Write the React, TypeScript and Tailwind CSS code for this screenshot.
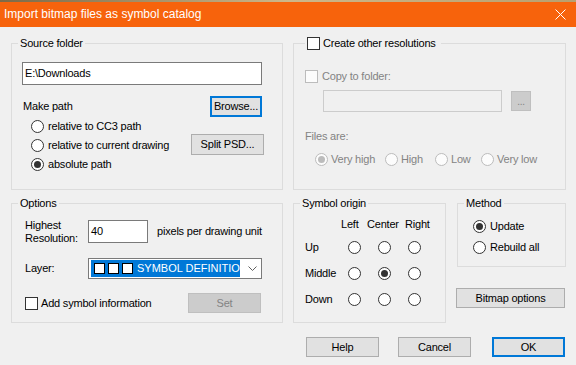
import React from 'react';

const FONT = { fontFamily: '"Liberation Sans", Arial, sans-serif' };

function Radio({ checked = false, disabled = false }: { checked?: boolean; disabled?: boolean }) {
  return (
    <span
      className={`w-[13px] h-[13px] rounded-full border flex items-center justify-center shrink-0 ${
        disabled ? 'border-[#bcbcbc] bg-[#fcfcfc]' : 'border-[#333333] bg-white'
      }`}
    >
      {checked && <span className={`w-[7px] h-[7px] rounded-full ${disabled ? 'bg-[#bcbcbc]' : 'bg-[#333333]'}`} />}
    </span>
  );
}

function Check({ disabled = false }: { disabled?: boolean }) {
  return (
    <span
      className={`w-[13px] h-[13px] border shrink-0 block ${disabled ? 'border-[#bcbcbc] bg-[#fcfcfc]' : 'border-[#333333] bg-white'}`}
    />
  );
}

function Btn({ label, w, primary = false, disabled = false, className = '' }: { label: string; w: string; primary?: boolean; disabled?: boolean; className?: string }) {
  const tone = primary
    ? 'border-2 border-[#0078d7] bg-[#e1e1e1] text-black'
    : disabled
    ? 'border border-[#bfbfbf] bg-[#cccccc] text-[#838383]'
    : 'border border-[#adadad] bg-[#e1e1e1] text-black';
  return (
    <div className={`${w} h-[20px] flex items-center justify-center shrink-0 ${tone} ${className}`}>
      {label}
    </div>
  );
}

function Group({ legend, className = '', children }: { legend: React.ReactNode; className?: string; children?: React.ReactNode }) {
  return (
    <fieldset className={`border border-[#dcdcdc] shrink-0 ${className}`}>
      <legend className="ml-[6px] px-[2px] h-[14px] leading-[14px]">{legend}</legend>
      {children}
    </fieldset>
  );
}

export default function App() {
  return (
    <div className="w-[576px] h-[365px] bg-[#f0f0f0] overflow-hidden text-[11px] leading-[13px] tracking-[-0.2px] text-black" style={FONT}>
      {/* title bar */}
      <div className="h-[2px] bg-gradient-to-r from-[#7d6a48] via-[#cdb78a] to-[#b8a070]" />
      <div className="h-[25px] bg-[#f7630c] flex items-center justify-between pl-[4px] pr-[10px]">
        <span className="text-white text-[12px] tracking-normal">Import bitmap files as symbol catalog</span>
        <svg width="11" height="11" viewBox="0 0 11 11" className="mb-[1px]">
          <path d="M0.5 0.5 L10.5 10.5 M10.5 0.5 L0.5 10.5" stroke="white" strokeWidth="1" />
        </svg>
      </div>

      <div className="flex gap-[10px] pl-[11px] pt-[9px]">
        {/* left column */}
        <div className="w-[272px] flex flex-col">
          <Group legend="Source folder" className="h-[154px]">
            <div className="flex flex-col">
              <div className="mt-[12px] ml-[10px] w-[240px] h-[23px] border border-[#7a7a7a] bg-white flex items-center pl-[2px]">
                E:\Downloads
              </div>
              <div className="mt-[11px] h-[21px] flex items-center justify-between pl-[11px] pr-[20px]">
                <span>Make path</span>
                <div className="w-[52px] h-[21px] border-2 border-[#0078d7] bg-[#e1e1e1] flex items-center justify-center">Browse...</div>
              </div>
              <div className="flex">
                <div className="w-[179px] flex flex-col">
                  {['relative to CC3 path', 'relative to current drawing', 'absolute path'].map((t, i) => (
                    <div key={t} className="h-[19px] flex items-center gap-[4px] pl-[19px]">
                      <Radio checked={i === 2} />
                      <span>{t}</span>
                    </div>
                  ))}
                </div>
                <Btn label="Split PSD..." w="w-[73px]" className="mt-[17px] h-[21px]" />
              </div>
            </div>
          </Group>

          <Group legend="Options" className="h-[127px] mt-[6px]">
            <div className="flex flex-col">
              <div className="mt-[10px] h-[23px] flex items-center pl-[13px]">
                <div className="w-[63px] flex flex-col">
                  <span>Highest</span>
                  <span>Resolution:</span>
                </div>
                <div className="w-[60px] h-[23px] border border-[#7a7a7a] bg-white flex items-center pl-[2px]">40</div>
                <span className="ml-[9px]">pixels per drawing unit</span>
              </div>
              <div className="mt-[15px] h-[21px] flex items-center pl-[13px]">
                <span className="w-[63px]">Layer:</span>
                <div className="w-[174px] h-[21px] border border-[#7a7a7a] bg-white flex items-center pl-[2px]">
                  <div className="w-[149px] h-[17px] bg-[#0078d7] flex items-center pl-[3px] overflow-hidden whitespace-nowrap">
                    <span className="w-[11px] h-[11px] bg-white border border-black shrink-0" />
                    <span className="w-[11px] h-[11px] bg-white border border-black shrink-0 ml-[3px]" />
                    <span className="w-[11px] h-[11px] bg-white border border-black shrink-0 ml-[3px]" />
                    <span className="text-white ml-[4px] tracking-normal">SYMBOL DEFINITION</span>
                  </div>
                  <svg width="9" height="5" viewBox="0 0 9 5" className="ml-[8px]">
                    <path d="M0.5 0.5 L4.5 4.5 L8.5 0.5" stroke="#606060" strokeWidth="1" fill="none" />
                  </svg>
                </div>
              </div>
              <div className="mt-[14px] h-[20px] flex items-center pl-[13px]">
                <Check />
                <span className="ml-[3px] w-[147px]">Add symbol information</span>
                <Btn label="Set" w="w-[73px]" disabled />
              </div>
            </div>
          </Group>
        </div>

        {/* right column */}
        <div className="w-[273px] flex flex-col">
          <fieldset className="border border-[#dcdcdc] h-[154px] shrink-0">
            <legend className="ml-[11px] pl-[2px] pr-[5px] h-[14px] flex items-center gap-[3px]">
              <Check />
              <span>Create other resolutions</span>
            </legend>
            <div className="flex flex-col text-[#838383]">
              <div className="mt-[20px] h-[13px] flex items-center pl-[11px] gap-[4px]">
                <Check disabled />
                <span>Copy to folder:</span>
              </div>
              <div className="mt-[7px] flex items-center pl-[29px]">
                <div className="w-[179px] h-[22px] border border-[#cccccc] bg-[#f0f0f0]" />
                <div className="ml-[9px] w-[20px] h-[20px] border border-[#bfbfbf] bg-[#cccccc] flex items-center justify-center text-[10px]">...</div>
              </div>
              <div className="mt-[18px] pl-[11px]">Files are:</div>
              <div className="mt-[10px] h-[13px] flex items-center pl-[21px]">
                <div className="w-[70px] flex items-center gap-[3px]"><Radio checked disabled /><span>Very high</span></div>
                <div className="w-[50px] flex items-center gap-[3px]"><Radio disabled /><span>High</span></div>
                <div className="w-[46px] flex items-center gap-[3px]"><Radio disabled /><span>Low</span></div>
                <div className="flex items-center gap-[3px]"><Radio disabled /><span>Very low</span></div>
              </div>
            </div>
          </fieldset>

          <div className="mt-[6px] flex gap-[11px]">
            <Group legend="Symbol origin" className="w-[153px] h-[127px]">
              <div className="flex flex-col">
                <div className="mt-[7px] h-[14px] flex items-center pl-[47px]">
                  <span className="w-[26px]">Left</span>
                  <span className="w-[38px]">Center</span>
                  <span>Right</span>
                </div>
                <div className="mt-[3px] flex flex-col">
                  {['Up', 'Middle', 'Down'].map((r) => (
                    <div key={r} className="h-[26px] flex items-center pl-[11px]">
                      <span className="w-[34px]">{r}</span>
                      {[0, 1, 2].map((c) => (
                        <div key={c} className="w-[30px] flex justify-center">
                          <Radio checked={r === 'Middle' && c === 1} />
                        </div>
                      ))}
                    </div>
                  ))}
                </div>
              </div>
            </Group>

            <div className="w-[110px] flex flex-col">
              <Group legend="Method" className="h-[71px]">
                <div className="mt-[6px] flex flex-col">
                  <div className="h-[21px] flex items-center gap-[4px] pl-[15px]"><Radio checked /><span>Update</span></div>
                  <div className="h-[21px] flex items-center gap-[4px] pl-[15px]"><Radio /><span>Rebuild all</span></div>
                </div>
              </Group>
              <Btn label="Bitmap options" w="w-[109px]" className="mt-[21px] -ml-[1px]" />
            </div>
          </div>

          <div className="mt-[14px] flex pl-[13px]">
            <Btn label="Help" w="w-[73px]" />
            <Btn label="Cancel" w="w-[73px]" className="ml-[19px]" />
            <Btn label="OK" w="w-[73px]" primary className="ml-[21px]" />
          </div>
        </div>
      </div>
    </div>
  );
}
